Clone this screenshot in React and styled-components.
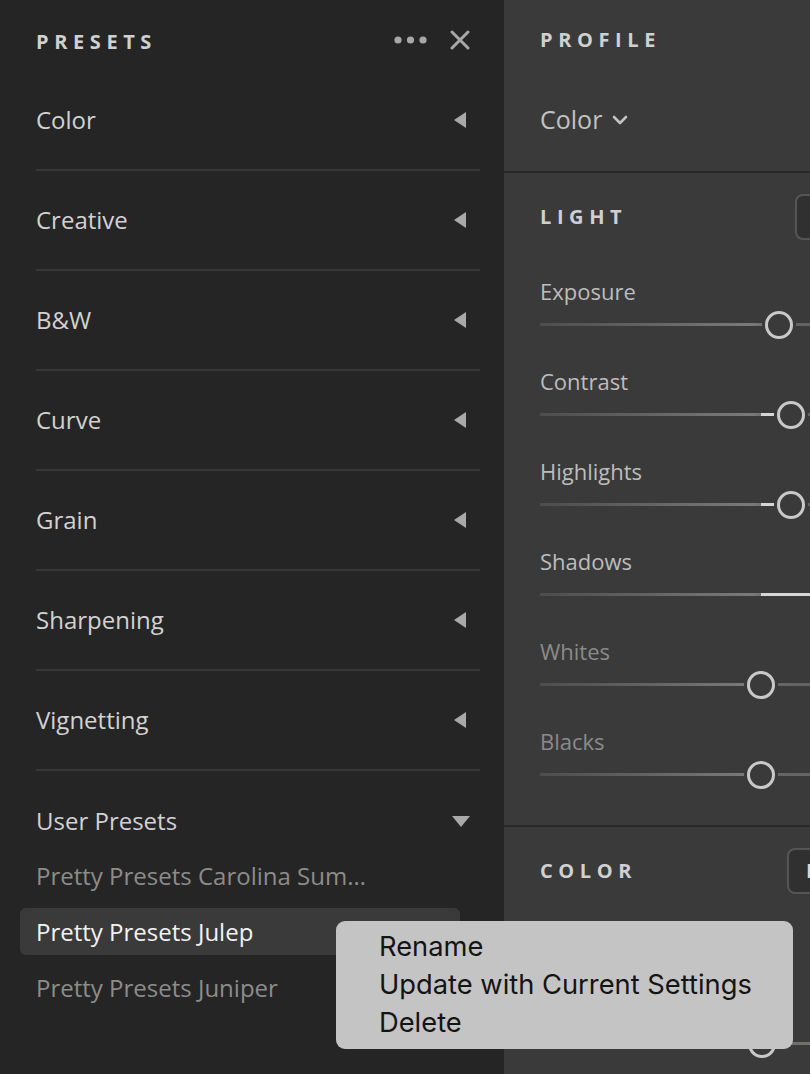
import React from 'react';
import styled, { createGlobalStyle } from 'styled-components';

const GlobalStyle = createGlobalStyle`
  body {
    margin: 0;
    background: #252525;
    font-family: "Open Sans", "Noto Sans", sans-serif;
  }
`;

const Screen = styled.div`
  position: relative;
  display: grid;
  grid-template-columns: 504px 306px;
  width: 810px;
  height: 1074px;
  overflow: hidden;
`;

/* left: presets */

const PresetsPanel = styled.div`
  background: #252525;
  padding: 0 24px 0 36px;
`;

const PanelHeader = styled.div`
  height: 71px;
  display: flex;
  justify-content: space-between;
  align-items: flex-start;
  padding-top: 30px;
  box-sizing: border-box;
`;

const Title = styled.div`
  color: #d0d0d0;
  font-size: 20px;
  font-weight: 700;
  letter-spacing: 0.28em;
  line-height: 24px;
`;

const HeaderIcons = styled.div`
  display: flex;
  align-items: center;
  gap: 22px;
  margin-right: 10px;
`;

const GroupRow = styled.div`
  height: ${p => (p.$last ? '81px' : '100px')};
  display: flex;
  justify-content: space-between;
  align-items: ${p => (p.$last ? 'flex-start' : 'center')};
  padding-top: ${p => (p.$last ? '35px' : '0')};
  box-sizing: border-box;
  border-bottom: ${p => (p.$last ? 'none' : '2px solid #383838')};
  color: #d2d2d2;
  font-size: 24px;
  line-height: 30px;
`;

const Arrow = styled.svg`
  margin-right: 14px;
  flex: none;
`;

const PresetList = styled.div`
  display: flex;
  flex-direction: column;
  gap: 9px;
  margin: 0 20px 0 -16px;
`;

const PresetItem = styled.div`
  height: 47px;
  display: flex;
  align-items: center;
  padding-left: 16px;
  border-radius: 6px;
  font-size: 24px;
  color: ${p => (p.$active ? '#f2f2f2' : '#8c8c8c')};
  background: ${p => (p.$active ? '#3a3a3a' : 'transparent')};
  white-space: nowrap;
`;

/* right: edit */

const EditPanel = styled.div`
  background: #3a3a3a;
  overflow: hidden;
`;

const Section = styled.div`
  width: 460px;
  padding: 0 0 ${p => p.$pb || 0}px 36px;
  border-bottom: ${p => (p.$divider ? '2px solid #292929' : 'none')};
`;

const SectionHead = styled.div`
  height: ${p => p.$h || 88}px;
  display: flex;
  align-items: center;
  justify-content: space-between;
  box-sizing: border-box;
`;

const SideButton = styled.div`
  width: 80px;
  height: 46px;
  margin-right: ${p => p.$mr}px;
  box-sizing: border-box;
  border: 2px solid #555;
  border-radius: 8px;
  background: #303030;
  color: #d8d8d8;
  font-size: 20px;
  font-weight: 700;
  line-height: 42px;
  padding-left: 17px;
`;

const ProfileSelect = styled.div`
  height: 91px;
  display: flex;
  align-items: center;
  gap: 10px;
  color: #c2c2c2;
  font-size: 25px;
  padding-bottom: 14px;
  box-sizing: border-box;
`;

const SliderBlock = styled.div`
  height: ${p => p.$h || 90}px;
  display: flex;
  flex-direction: column;
`;

const SliderLabel = styled.div`
  height: 30px;
  margin-top: 15px;
  line-height: 30px;
  font-size: 22px;
  color: ${p => (p.$dim ? '#8a8a8a' : '#bdbdbd')};
`;

const TrackWrap = styled.div`
  position: relative;
  width: 442px;
  height: 3px;
  margin-top: 17px;
`;

const Track = styled.div`
  position: absolute;
  inset: 0;
  background: ${p =>
    p.$temp
      ? 'linear-gradient(90deg, #4a5a6e 0%, #6a6a6a 50%, #8c8a66 100%)'
      : 'linear-gradient(90deg, #4d4d4d 0%, #7a7a7a 48%, #666 52%, #5a5a5a 100%)'};
`;

const Fill = styled.div`
  position: absolute;
  top: 0;
  height: 3px;
  background: #d6d6d6;
`;

const Thumb = styled.div`
  position: absolute;
  top: 50%;
  width: 28px;
  height: 28px;
  box-sizing: border-box;
  border-radius: 50%;
  border: 3px solid #c9c9c9;
  background: #3a3a3a;
  box-shadow: 0 0 0 3px #3a3a3a;
  transform: translate(-50%, -50%);
`;

/* context menu */

const Menu = styled.div`
  position: absolute;
  left: 336px;
  top: 921px;
  width: 457px;
  height: 128px;
  box-sizing: border-box;
  padding: 7px 0 0 43px;
  border-radius: 9px;
  background: #c4c4c4;
  font-family: Inter, "Liberation Sans", sans-serif;
`;

const MenuItem = styled.div`
  height: 38px;
  line-height: 38px;
  font-size: 27.3px;
  color: #141414;
`;

const Dots = () => (
  <svg width="34" height="10" viewBox="0 0 34 10">
    <circle cx="4" cy="5" r="3.6" fill="#a8a8a8" />
    <circle cx="16.5" cy="5" r="3.6" fill="#a8a8a8" />
    <circle cx="29" cy="5" r="3.6" fill="#a8a8a8" />
  </svg>
);

const Close = () => (
  <svg width="20" height="20" viewBox="0 0 20 20">
    <path d="M2 2L18 18M18 2L2 18" stroke="#a8a8a8" strokeWidth="3" strokeLinecap="round" />
  </svg>
);

const LeftTri = () => (
  <Arrow width="12" height="16" viewBox="0 0 12 16">
    <path d="M12 0V16L0 8Z" fill="#a9a9a9" />
  </Arrow>
);

const DownTri = () => (
  <Arrow width="18" height="11" viewBox="0 0 18 11" style={{ marginRight: 10, marginTop: 10 }}>
    <path d="M0 0H18L9 11Z" fill="#a9a9a9" />
  </Arrow>
);

const Chevron = () => (
  <svg width="16" height="10" viewBox="0 0 16 10" style={{ marginTop: 3 }}>
    <path d="M2 2L8 8L14 2" stroke="#c2c2c2" strokeWidth="2.6" fill="none" strokeLinecap="round" strokeLinejoin="round" />
  </svg>
);

const groups = ['Color', 'Creative', 'B&W', 'Curve', 'Grain', 'Sharpening', 'Vignetting'];

const presets = [
  { name: 'Pretty Presets Carolina Sum…' },
  { name: 'Pretty Presets Julep', active: true },
  { name: 'Pretty Presets Juniper' },
];

// thumb / fill positions in px from track start; zero point at 221
const lightSliders = [
  { label: 'Exposure', thumb: 239 },
  { label: 'Contrast', thumb: 251, fill: [221, 237] },
  { label: 'Highlights', thumb: 251, fill: [221, 237] },
  { label: 'Shadows', thumb: 420, fill: [221, 406] },
  { label: 'Whites', thumb: 221, dim: true },
  { label: 'Blacks', thumb: 221, dim: true },
];

const Slider = ({ label, thumb, fill, dim, temp }) => (
  <SliderBlock>
    <SliderLabel $dim={dim}>{label}</SliderLabel>
    <TrackWrap>
      <Track $temp={temp} />
      {fill && <Fill style={{ left: fill[0], width: fill[1] - fill[0] }} />}
      <Thumb style={{ left: thumb }} />
    </TrackWrap>
  </SliderBlock>
);

export default function App() {
  return (
    <>
      <GlobalStyle />
      <Screen>
        <PresetsPanel>
          <PanelHeader>
            <Title>PRESETS</Title>
            <HeaderIcons>
              <Dots />
              <Close />
            </HeaderIcons>
          </PanelHeader>
          {groups.map(g => (
            <GroupRow key={g}>
              <span>{g}</span>
              <LeftTri />
            </GroupRow>
          ))}
          <GroupRow $last>
            <span>User Presets</span>
            <DownTri />
          </GroupRow>
          <PresetList>
            {presets.map(p => (
              <PresetItem key={p.name} $active={p.active}>{p.name}</PresetItem>
            ))}
          </PresetList>
        </PresetsPanel>

        <EditPanel>
          <Section $divider>
            <SectionHead $h={80}>
              <Title>PROFILE</Title>
            </SectionHead>
            <ProfileSelect>
              Color <Chevron />
            </ProfileSelect>
          </Section>

          <Section $divider $pb={24}>
            <SectionHead>
              <Title>LIGHT</Title>
              <SideButton $mr={125} />
            </SectionHead>
            {lightSliders.map(s => (
              <Slider key={s.label} {...s} />
            ))}
          </Section>

          <Section>
            <SectionHead>
              <Title>COLOR</Title>
              <SideButton $mr={133}>B&amp;W</SideButton>
            </SectionHead>
            {/* white balance row and temp label sit under the context menu */}
            <SliderBlock $h={65} />
            <Slider label="" thumb={222} temp />
          </Section>
        </EditPanel>

        <Menu>
          <MenuItem>Rename</MenuItem>
          <MenuItem>Update with Current Settings</MenuItem>
          <MenuItem>Delete</MenuItem>
        </Menu>
      </Screen>
    </>
  );
}
